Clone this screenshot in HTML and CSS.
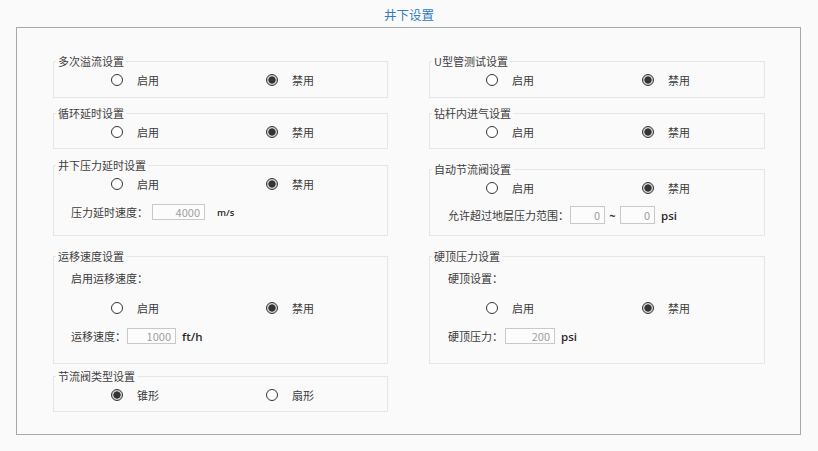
FILE: index.html
```html
<!DOCTYPE html>
<html lang="zh-CN">
<head>
<meta charset="utf-8">
<title>井下设置</title>
<link rel="stylesheet" href="styles.css">
</head>
<body>
<div class="title">井下设置</div>
<div class="frame">
  <div class="col col-left">
    <div class="group g1">
      <span class="legend">多次溢流设置</span>
      <div class="opts">
        <label class="opt"><span class="radio"></span>启用</label>
        <label class="opt"><span class="radio on"></span>禁用</label>
      </div>
    </div>
    <div class="group g2">
      <span class="legend">循环延时设置</span>
      <div class="opts">
        <label class="opt"><span class="radio"></span>启用</label>
        <label class="opt"><span class="radio on"></span>禁用</label>
      </div>
    </div>
    <div class="group g3">
      <span class="legend">井下压力延时设置</span>
      <div class="opts">
        <label class="opt"><span class="radio"></span>启用</label>
        <label class="opt"><span class="radio on"></span>禁用</label>
      </div>
      <div class="field f-after-opts">
        <span class="flabel">压力延时速度：</span>
        <input class="box w53" type="text" value="4000" readonly>
        <span class="unit small gap12">m/s</span>
      </div>
    </div>
    <div class="group g4">
      <span class="legend">运移速度设置</span>
      <div class="sublabel">启用运移速度：</div>
      <div class="opts o-after-sub">
        <label class="opt"><span class="radio"></span>启用</label>
        <label class="opt"><span class="radio on"></span>禁用</label>
      </div>
      <div class="field f-after-opts">
        <span class="flabel">运移速度：</span>
        <input class="box w49" type="text" value="1000" readonly>
        <span class="unit">ft/h</span>
      </div>
    </div>
    <div class="group g5">
      <span class="legend">节流阀类型设置</span>
      <div class="opts">
        <label class="opt"><span class="radio on"></span>锥形</label>
        <label class="opt"><span class="radio"></span>扇形</label>
      </div>
    </div>
  </div>
  <div class="col col-right">
    <div class="group g1">
      <span class="legend">U型管测试设置</span>
      <div class="opts">
        <label class="opt"><span class="radio"></span>启用</label>
        <label class="opt"><span class="radio on"></span>禁用</label>
      </div>
    </div>
    <div class="group g2">
      <span class="legend">钻杆内进气设置</span>
      <div class="opts">
        <label class="opt"><span class="radio"></span>启用</label>
        <label class="opt"><span class="radio on"></span>禁用</label>
      </div>
    </div>
    <div class="group r3">
      <span class="legend">自动节流阀设置</span>
      <div class="opts">
        <label class="opt"><span class="radio"></span>启用</label>
        <label class="opt"><span class="radio on"></span>禁用</label>
      </div>
      <div class="field tall">
        <span class="flabel">允许超过地层压力范围：</span>
        <input class="box w35 h18 first" type="text" value="0" readonly>
        <span class="tilde">~</span>
        <input class="box w35 h18 nm" type="text" value="0" readonly>
        <span class="unit">psi</span>
      </div>
    </div>
    <div class="group g4">
      <span class="legend">硬顶压力设置</span>
      <div class="sublabel">硬顶设置：</div>
      <div class="opts o-after-sub">
        <label class="opt"><span class="radio"></span>启用</label>
        <label class="opt"><span class="radio on"></span>禁用</label>
      </div>
      <div class="field f-after-opts">
        <span class="flabel">硬顶压力：</span>
        <input class="box w50" type="text" value="200" readonly>
        <span class="unit">psi</span>
      </div>
    </div>
  </div>
</div>
</body>
</html>
```

FILE: styles.css
```css
* { box-sizing: border-box; }

body {
  margin: 0;
  background: #fafafa;
  font-family: "Noto Sans CJK SC", "Noto Sans", sans-serif;
  font-size: 11px;
  color: #3a3a3a;
}

.title {
  height: 27px;
  display: flex;
  align-items: center;
  justify-content: center;
  font-size: 12.5px;
  color: #2f7cc2;
  padding-top: 1px;
}

.frame {
  margin-left: 16px;
  width: 785px;
  height: 408px;
  border: 1px solid #a8a8a8;
  display: flex;
  padding-left: 36px;
  gap: 41px;
}

.col {
  display: flex;
  flex-direction: column;
}
.col-left { width: 335px; }
.col-right { width: 336px; }

.group {
  position: relative;
  border: 1px solid #e6e6e6;
  padding-top: 10px;
}
.g1 { margin-top: 33px; height: 37px; }
.g2 { margin-top: 15px; height: 36px; }
.g3 { margin-top: 16px; height: 71px; }
.g4 { margin-top: 20px; height: 108px; padding-top: 13px; }
.g5 { margin-top: 12px; height: 36px; }
.r3 { margin-top: 20px; height: 67px; }

.legend {
  position: absolute;
  top: -9px;
  left: 2px;
  padding: 0 2px;
  line-height: 16px;
  background: #fafafa;
  color: #404040;
}

.opts {
  display: flex;
  align-items: center;
  height: 16px;
  padding-left: 56px;
}
.col-left .opts { padding-left: 57px; }

.opt {
  display: flex;
  align-items: center;
  gap: 14px;
}
.opt:first-child { width: 155px; }
.col-right .opt:first-child { width: 156px; }

.radio {
  width: 12px;
  height: 12px;
  border-radius: 50%;
  border: 1.5px solid #333;
  background: #fff;
  flex: none;
}
.radio.on {
  background: radial-gradient(circle, #333 0 3.3px, #cfcfcf 3.9px);
}

.sublabel {
  height: 16px;
  line-height: 16px;
  padding-left: 17px;
}
.col-right .sublabel { padding-left: 18px; }

.o-after-sub { margin-top: 14px; }

.field {
  display: flex;
  align-items: center;
  height: 16px;
  padding-left: 17px;
}
.col-right .field { padding-left: 18px; }
.f-after-opts { margin-top: 12px; }
.field.tall { height: 18px; margin-top: 10px; }

.box {
  height: 16px;
  margin: 0 0 0 5px;
  padding: 0 4px 0 0;
  border: 1px solid #c9c9c9;
  background: #fcfcfc;
  font: inherit;
  font-size: 11px;
  color: #9e9e9e;
  text-align: right;
  outline: none;
}
.h18 { height: 18px; }
.w53 { width: 53px; margin-left: 4px; }
.w49 { width: 49px; margin-left: 1px; }
.w50 { width: 50px; margin-left: 2px; }
.w35 { width: 35px; }
.box.first { margin-left: 1px; }
.box.nm { margin-left: 0; }

.tilde {
  width: 15px;
  text-align: center;
  font-weight: bold;
  color: #333;
}

.unit {
  margin-left: 6px;
  font-family: "Open Sans", "Liberation Sans", sans-serif;
  font-weight: 600;
  font-size: 11.5px;
  color: #2a2a2a;
}
.unit.small { font-size: 9.5px; }
.gap12 { margin-left: 12px; }
```
